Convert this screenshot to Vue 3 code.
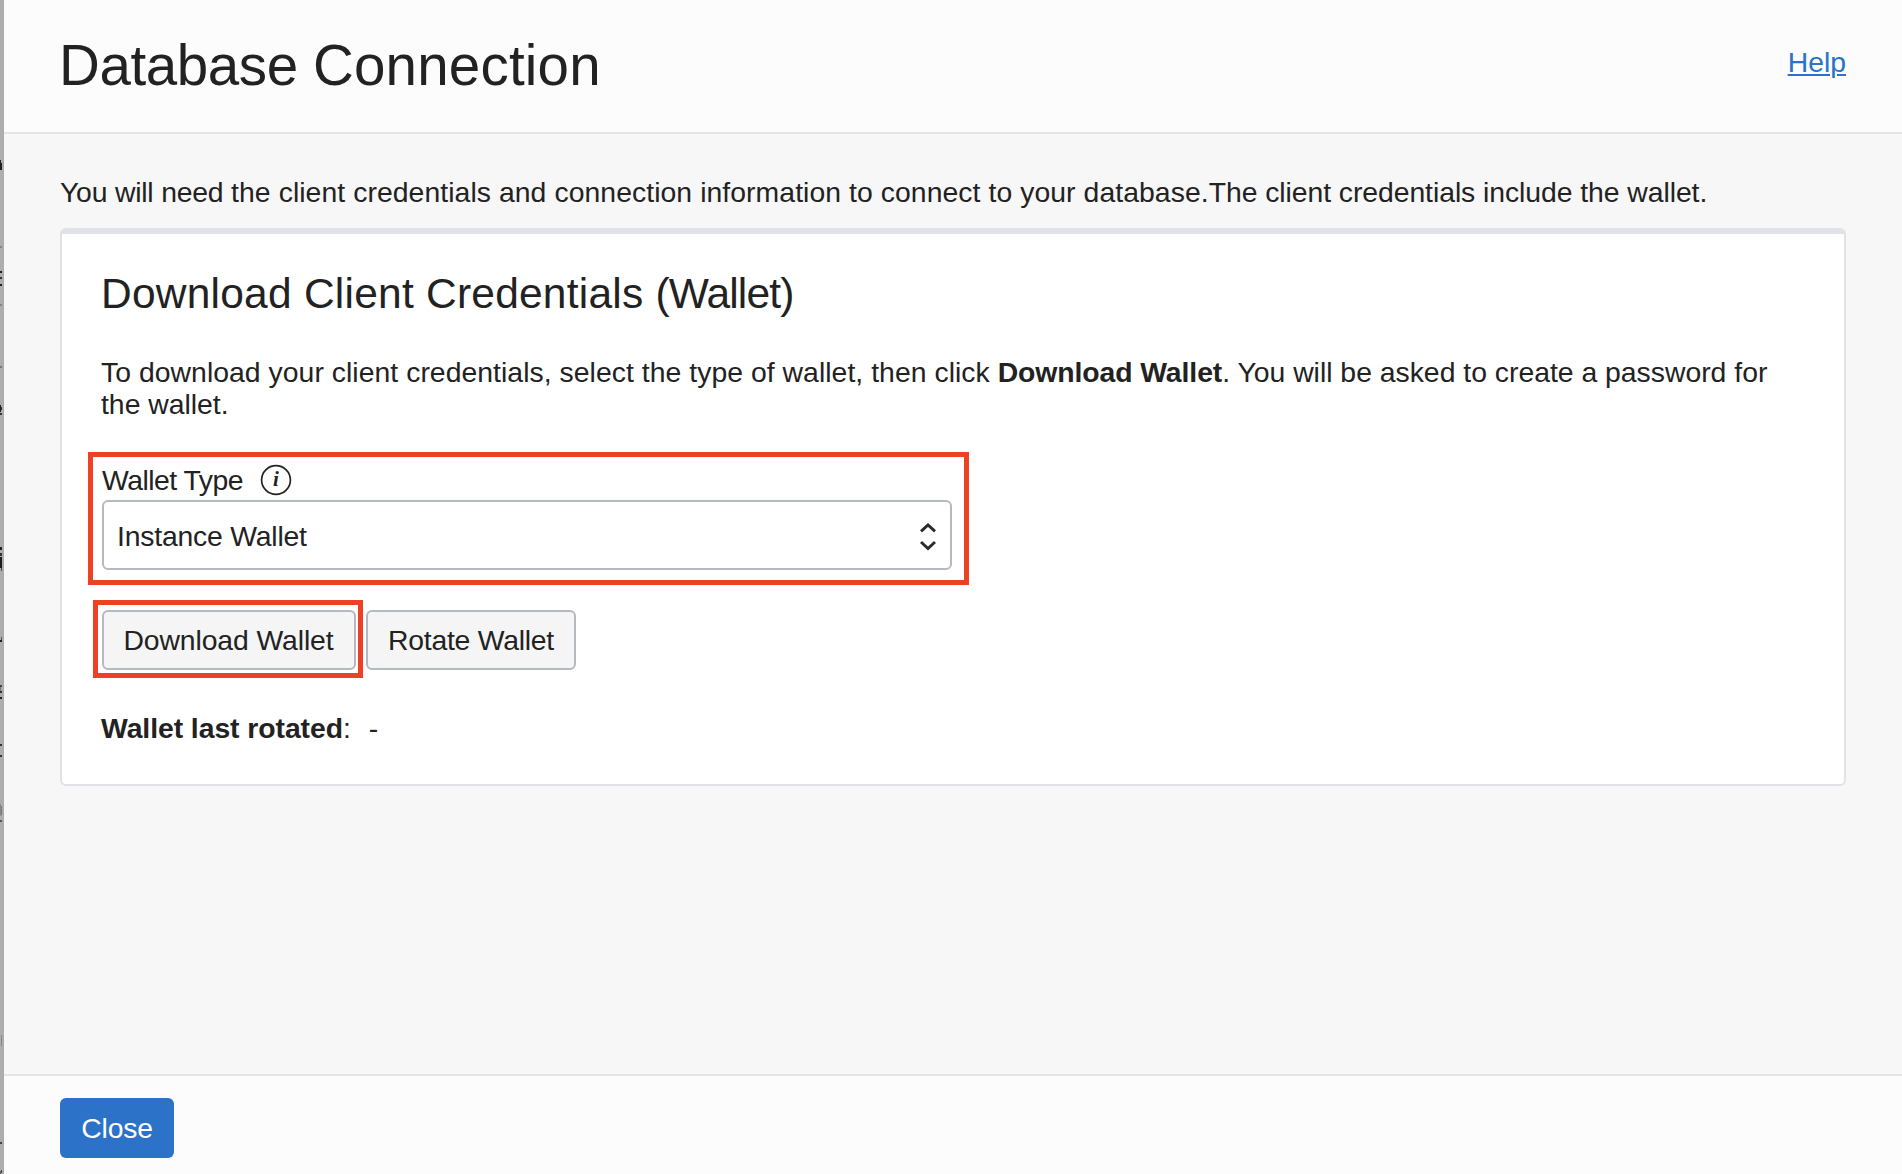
<script setup>
import { ref } from 'vue'

const walletType = ref('Instance Wallet')

// Slivers of the dimmed page that stay visible beside the panel: [x, y, w, h, colour]
const slivers = [
  [0, 160, 1, 10, '#222'], [1, 163, 1, 7, '#1a1a1a'],
  [0, 246, 2, 2, '#858585'],
  [0, 271, 2, 2, '#222'], [0, 277, 2, 2, '#333'], [0, 284, 2, 2, '#222'],
  [0, 304, 2, 2, '#858585'], [0, 366, 2, 2, '#777'],
  [0, 405, 1, 7, '#222'], [1, 407, 1, 3, '#333'], [0, 413, 2, 2, '#333'],
  [0, 547, 2, 3, '#222'], [0, 553, 2, 3, '#333'], [0, 557, 2, 11, '#1c1c1c'], [1, 568, 1, 3, '#444'],
  [1, 637, 1, 3, '#555'], [0, 640, 2, 2, '#222'],
  [0, 685, 2, 2, '#444'], [0, 691, 2, 2, '#333'], [0, 697, 2, 2, '#222'], [0, 687, 1, 4, '#777'],
  [0, 744, 2, 2, '#333'], [0, 755, 2, 2, '#333'],
  [0, 804, 1, 12, '#888'], [1, 806, 1, 9, '#777'], [0, 820, 2, 2, '#555'],
  [1, 1035, 1, 11, '#888'],
  [0, 1142, 2, 2, '#444'], [0, 1171, 1, 3, '#666'], [1, 1170, 1, 3, '#444'],
]
</script>

<template>
  <div class="screen">
    <svg class="backdrop" width="4" height="1174" viewBox="0 0 4 1174" shape-rendering="crispEdges" aria-hidden="true">
      <rect v-for="(s, i) in slivers" :key="i" :x="s[0]" :y="s[1]" :width="s[2]" :height="s[3]" :fill="s[4]" />
    </svg>

    <section class="panel">
      <header class="panel-header">
        <h1><span class="tight">Database </span><span class="loose">Connection</span></h1>
        <a class="help" href="#">Help</a>
      </header>

      <main class="panel-body">
        <p class="intro"><span class="you">You will need </span><span class="intro-rest">the client credentials and connection information to connect to your database.</span><span class="intro-end">The client credentials include the wallet.</span></p>

        <article class="card">
          <h2><span class="h2-main">Download Client Credentials </span><span class="h2-end">(Wallet)</span></h2>
          <p class="lead"><span class="lead-start">To download your client credentials, select the type of wallet, then click </span><b>Download Wallet</b>. You will be asked to create a password for<br />the wallet.</p>

          <div class="field">
            <div class="label-row">
              <label class="label">Wallet Type</label>
              <svg class="info" width="32" height="32" viewBox="0 0 32 32">
                <circle cx="16" cy="16" r="14.4" fill="none" stroke="#222" stroke-width="1.7" />
                <text x="16" y="22.4" text-anchor="middle">i</text>
              </svg>
            </div>
            <div class="select">
              <span>{{ walletType }}</span>
              <svg width="18" height="30" viewBox="0 0 18 30" fill="none" stroke="#2b2b2b" stroke-width="2.9">
                <path d="M2 10.4 L9 3.9 L16 10.4" />
                <path d="M2 21 L9 27.5 L16 21" />
              </svg>
            </div>
            <i class="mark mark-field"></i>
          </div>

          <div class="actions">
            <button class="btn download">Download Wallet</button>
            <button class="btn rotate">Rotate Wallet</button>
            <i class="mark mark-download"></i>
          </div>

          <p class="rotated"><b>Wallet last rotated</b><span>:</span><span class="value">-</span></p>
        </article>
      </main>

      <footer class="panel-footer">
        <button class="close">Close</button>
      </footer>
    </section>
  </div>
</template>

<style>
body {
  margin: 0;
  overflow: hidden;
}
</style>

<style scoped>
.screen {
  display: flex;
  width: 1902px;
  height: 1174px;
  overflow: hidden;
  background: #f7f7f7;
  color: #222;
  font: 28.35px/32px "Liberation Sans", Arial, sans-serif;
}
.screen * {
  box-sizing: border-box;
}
h1, h2, p {
  margin: 0;
  font-weight: 400;
}
button {
  font: inherit;
  padding: 0;
  white-space: nowrap;
}
.backdrop {
  flex: none;
  background: linear-gradient(90deg, #aeaeae 0 75%, #a9a9a9);
}
.panel {
  flex: 1;
  display: flex;
  flex-direction: column;
}
.panel-header {
  display: flex;
  justify-content: space-between;
  align-items: flex-start;
  height: 134px;
  padding: 33px 56px 0 55px;
  background: #fcfcfc;
  border-bottom: 2px solid #e5e5e5;
}
h1 {
  margin-top: 1px;
  font-size: 56.5px;
  line-height: 64px;
}
.tight {
  letter-spacing: -0.4px;
}
.loose {
  letter-spacing: 0.2px;
}
.help {
  margin-top: 13px;
  color: #2b72c8;
  text-decoration: underline;
  text-decoration-thickness: 2px;
  text-underline-offset: 2px;
}
.panel-body {
  flex: 1;
  padding: 42px 56px 0;
}
.intro {
  white-space: nowrap;
}
.you {
  letter-spacing: -0.2px;
}
.intro-rest {
  letter-spacing: 0.07px;
}
.intro-end {
  letter-spacing: -0.06px;
}
.card {
  height: 558px;
  margin-top: 20px;
  padding: 36px 39px 0;
  background: #fff;
  border: 2px solid #e1e2e7;
  border-top-width: 6px;
  border-radius: 6px;
}
h2 {
  font-size: 42.5px;
  line-height: 48px;
}
.h2-main {
  letter-spacing: 0.23px;
}
.h2-end {
  letter-spacing: -0.85px;
}
.lead {
  margin-top: 38px;
  white-space: nowrap;
}
.lead-start {
  letter-spacing: 0.045px;
}
.lead b {
  letter-spacing: -0.08px;
}
.field {
  position: relative;
  width: 850px;
  margin: 44px 0 0 1px;
}
.label-row {
  display: flex;
  align-items: center;
  gap: 16px;
  height: 32px;
}
.label {
  width: 142px;
  letter-spacing: -0.5px;
  white-space: nowrap;
}
.info text {
  font: italic bold 21px "Liberation Serif", serif;
  fill: #222;
}
.select {
  display: flex;
  align-items: center;
  justify-content: space-between;
  height: 70px;
  margin-top: 4px;
  padding: 2px 13px 0 13px;
  border: 2px solid #b5b9c0;
  border-radius: 6px;
  letter-spacing: -0.2px;
}
.mark {
  position: absolute;
  border: 5px solid #ed4024;
  pointer-events: none;
}
.mark-field {
  left: -14px;
  top: -12px;
  width: 881px;
  height: 133px;
}
.actions {
  position: relative;
  display: flex;
  gap: 10px;
  margin: 40px 0 0 1px;
}
.btn {
  height: 60px;
  color: #222;
  background: #f5f5f5;
  border: 2px solid #b5b9c0;
  border-radius: 6px;
}
.download {
  width: 254px;
  padding-right: 1px;
  letter-spacing: -0.1px;
}
.rotate {
  width: 210px;
  letter-spacing: -0.25px;
}
.mark-download {
  left: -9px;
  top: -10px;
  width: 270px;
  height: 78px;
}
.rotated {
  margin-top: 42px;
}
.rotated b {
  letter-spacing: -0.06px;
}
.value {
  margin-left: 18px;
}
.panel-footer {
  height: 100px;
  padding: 22px 56px 0;
  background: #fcfcfc;
  border-top: 2px solid #e5e5e5;
}
.close {
  width: 114px;
  height: 60px;
  color: #fff;
  background: #2b72c8;
  border: 0;
  border-radius: 6px;
  letter-spacing: -0.2px;
}
</style>
